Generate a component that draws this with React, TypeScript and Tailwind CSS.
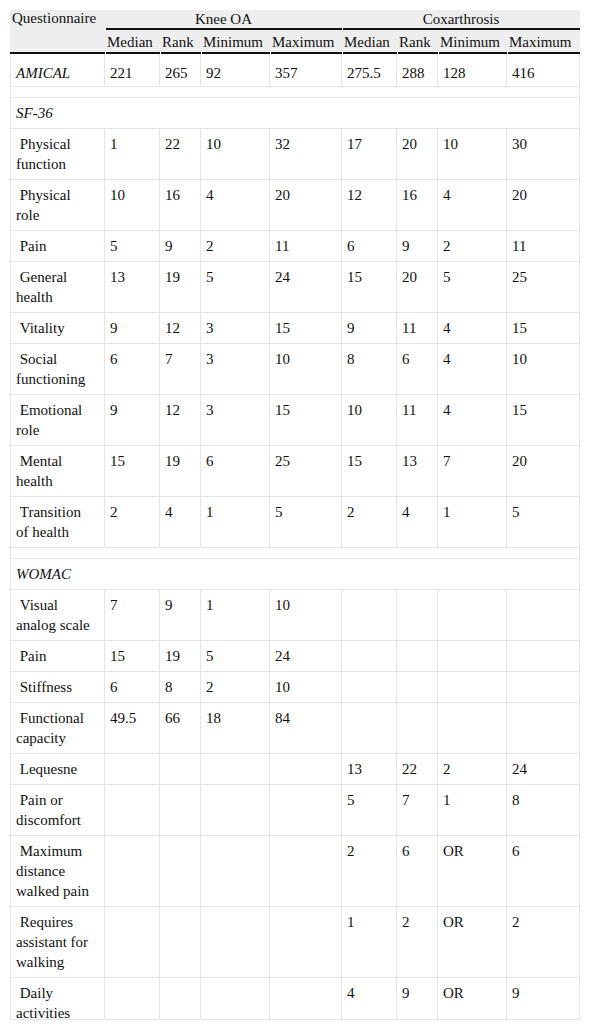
import React from "react";

type Row =
  | { kind: "spacer" }
  | { kind: "section"; label: string }
  | { kind: "data"; label: string; cells: string[]; italic?: boolean; first?: boolean };

const rows: Row[] = [
  { kind: "data", label: "AMICAL", italic: true, first: true, cells: ["221", "265", "92", "357", "275.5", "288", "128", "416"] },
  { kind: "spacer" },
  { kind: "section", label: "SF-36" },
  { kind: "data", label: "\u00a0Physical function", cells: ["1", "22", "10", "32", "17", "20", "10", "30"] },
  { kind: "data", label: "\u00a0Physical role", cells: ["10", "16", "4", "20", "12", "16", "4", "20"] },
  { kind: "data", label: "\u00a0Pain", cells: ["5", "9", "2", "11", "6", "9", "2", "11"] },
  { kind: "data", label: "\u00a0General health", cells: ["13", "19", "5", "24", "15", "20", "5", "25"] },
  { kind: "data", label: "\u00a0Vitality", cells: ["9", "12", "3", "15", "9", "11", "4", "15"] },
  { kind: "data", label: "\u00a0Social functioning", cells: ["6", "7", "3", "10", "8", "6", "4", "10"] },
  { kind: "data", label: "\u00a0Emotional role", cells: ["9", "12", "3", "15", "10", "11", "4", "15"] },
  { kind: "data", label: "\u00a0Mental health", cells: ["15", "19", "6", "25", "15", "13", "7", "20"] },
  { kind: "data", label: "\u00a0Transition of health", cells: ["2", "4", "1", "5", "2", "4", "1", "5"] },
  { kind: "spacer" },
  { kind: "section", label: "WOMAC" },
  { kind: "data", label: "\u00a0Visual analog scale", cells: ["7", "9", "1", "10", "", "", "", ""] },
  { kind: "data", label: "\u00a0Pain", cells: ["15", "19", "5", "24", "", "", "", ""] },
  { kind: "data", label: "\u00a0Stiffness", cells: ["6", "8", "2", "10", "", "", "", ""] },
  { kind: "data", label: "\u00a0Functional capacity", cells: ["49.5", "66", "18", "84", "", "", "", ""] },
  { kind: "data", label: "\u00a0Lequesne", cells: ["", "", "", "", "13", "22", "2", "24"] },
  { kind: "data", label: "\u00a0Pain or discomfort", cells: ["", "", "", "", "5", "7", "1", "8"] },
  { kind: "data", label: "\u00a0Maximum distance walked pain", cells: ["", "", "", "", "2", "6", "OR", "6"] },
  { kind: "data", label: "\u00a0Requires assistant for walking", cells: ["", "", "", "", "1", "2", "OR", "2"] },
  { kind: "data", label: "\u00a0Daily activities", cells: ["", "", "", "", "4", "9", "OR", "9"] },
];

const widths = [95, 55, 41, 69, 72, 55, 41, 69, 73];

export default function App() {
  return (
    <div
      className="bg-white text-[#111111] text-[15px] leading-5"
      style={{ fontFamily: '"Liberation Serif", "Times New Roman", serif' }}
    >
      <div className="ml-[10px] mt-[10px] w-[570px] h-[1010px] overflow-hidden border-b border-[#e5e5e5]">
        <table className="table-fixed border-separate border-spacing-0 w-[570px]">
          <colgroup>
            {widths.map((w, i) => (
              <col key={i} style={{ width: w }} />
            ))}
          </colgroup>
          <thead>
            <tr>
              <th rowSpan={2} className="p-0 align-top font-normal text-left">
                <div className="bg-[#eeeeee] h-[42px] pl-[2px] leading-[16px]">Questionnaire</div>
                <div className="h-[2px] bg-[#111111]" />
              </th>
              <th colSpan={4} className="p-0 font-normal align-top">
                <div className="bg-[#eeeeee] h-[18px] leading-[18px] text-center">Knee OA</div>
                <div className="h-[2px] bg-[#111111] ml-px" />
              </th>
              <th colSpan={4} className="p-0 font-normal align-top">
                <div className="bg-[#eeeeee] h-[18px] leading-[18px] text-center">Coxarthrosis</div>
                <div className="h-[2px] bg-[#111111] ml-px" />
              </th>
            </tr>
            <tr>
              {["Median", "Rank", "Minimum", "Maximum", "Median", "Rank", "Minimum", "Maximum"].map((h, i) => (
                <th key={i} className="p-0 font-normal text-left align-top">
                  <div className="bg-[#eeeeee] h-[22px] pt-[2px] pl-[2px] leading-5 whitespace-nowrap">{h}</div>
                  <div className="h-[2px] bg-[#111111] ml-px" />
                </th>
              ))}
            </tr>
          </thead>
          <tbody>
            {rows.map((r, i) => {
              if (r.kind === "spacer") {
                return (
                  <tr key={i}>
                    <td colSpan={9} className="p-0 h-[11px] border-l border-r border-b border-[#e5e5e5]" />
                  </tr>
                );
              }
              if (r.kind === "section") {
                return (
                  <tr key={i}>
                    <td
                      colSpan={9}
                      className="px-[5px] pt-[5px] pb-[5px] italic border-l border-r border-b border-[#e5e5e5] align-top"
                    >
                      {r.label}
                    </td>
                  </tr>
                );
              }
              const pad = r.first ? "pt-[9px] pb-[3px]" : "pt-[5px] pb-[5px]";
              return (
                <tr key={i}>
                  <td
                    className={`pl-[5px] pr-[12px] ${pad} align-top border-l border-r border-b border-[#e5e5e5] ${
                      r.italic ? "italic" : ""
                    }`}
                  >
                    {r.label}
                  </td>
                  {r.cells.map((c, j) => (
                    <td key={j} className={`px-[5px] ${pad} align-top border-r border-b border-[#e5e5e5]`}>
                      {c}
                    </td>
                  ))}
                </tr>
              );
            })}
          </tbody>
        </table>
      </div>
    </div>
  );
}
